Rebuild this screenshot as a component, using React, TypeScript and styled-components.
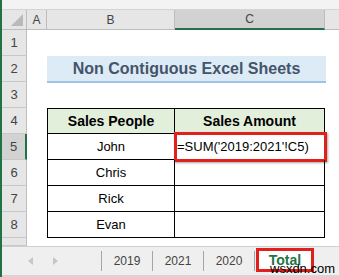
import {Fragment} from "react";
import styled, {createGlobalStyle, css} from "styled-components";

const GlobalStyle = createGlobalStyle`
  html, body {
    margin: 0;
    padding: 0;
    background: #ffffff;
    overflow: hidden;
  }
  body {
    font-family: "Liberation Sans", Arial, sans-serif;
  }
`

const green = "#217346";

const Frame = styled.div`
  width: 337px;
  height: 277px;
  border-left: 2px solid ${green};
  display: flex;
  flex-direction: column;
  overflow: hidden;
`

const TopStrip = styled.div`
  height: 10px;
  background: #f3f3f3;
  border-bottom: 1px solid #d4d4d4;
  box-sizing: border-box;
`

const Sheet = styled.div`
  display: grid;
  grid-template-columns: 25px 20px 128px 150px 1fr;
  grid-template-rows: 20px repeat(8, 26px) 8px;
  background: #ffffff;
`

const Corner = styled.div`
  position: relative;
  background: #e6e6e6;
  border-right: 1px solid #bdbdbd;
  border-bottom: 1px solid #bdbdbd;
  box-sizing: border-box;

  &::after {
    content: "";
    position: absolute;
    right: 3px;
    bottom: 3px;
    border-style: solid;
    border-width: 0 0 12px 12px;
    border-color: transparent transparent #b9b9b9 transparent;
  }
`

const ColHead = styled.div<{ $active?: boolean; $blank?: boolean }>`
  display: flex;
  align-items: center;
  justify-content: center;
  font-size: 12px;
  color: #444444;
  background: ${p => (p.$active ? "#d2d2d2" : "#e6e6e6")};
  border-right: ${p => (p.$blank ? "none" : "1px solid #bdbdbd")};
  border-bottom: ${p => (p.$active ? `2px solid ${green}` : "1px solid #bdbdbd")};
  box-sizing: border-box;
`

const RowHead = styled.div<{ $active?: boolean }>`
  display: flex;
  align-items: center;
  justify-content: center;
  font-size: 13px;
  color: #444444;
  background: ${p => (p.$active ? "#d2d2d2" : "#e6e6e6")};
  border-right: ${p => (p.$active ? `2px solid ${green}` : "1px solid #bdbdbd")};
  border-bottom: 1px solid #c8c8c8;
  box-sizing: border-box;
`

const Empty = styled.div<{ $span?: number }>`
  grid-column: span ${p => p.$span ?? 1};
`

const Title = styled.div`
  grid-column: span 2;
  margin-right: -1px;
  display: flex;
  align-items: center;
  justify-content: center;
  background: #ddebf7;
  border-bottom: 2px solid #9dc3e6;
  margin-bottom: -1px;
  color: #44546a;
  font-weight: bold;
  font-size: 16px;
`

const Cell = styled.div<{ $head?: boolean; $first?: boolean; $left?: boolean }>`
  position: relative;
  display: flex;
  align-items: center;
  justify-content: ${p => (p.$left ? "flex-start" : "center")};
  padding-left: ${p => (p.$left ? "2px" : "0")};
  font-size: 13px;
  color: #000000;
  border-right: 1px solid #000000;
  border-bottom: 1px solid #000000;
  box-sizing: border-box;
  ${p => p.$first && css`border-left: 1px solid #000000;`}
  ${p => p.$head && css`
    border-top: 1px solid #000000;
    background: #e2efda;
    font-weight: bold;
    font-size: 14px;
  `}
`

const Highlight = styled.div`
  position: absolute;
  left: -1px;
  top: -2px;
  right: -3px;
  bottom: -3px;
  border: 3px solid #e0201c;
  box-shadow: 1px 1px 2px rgba(0, 0, 0, 0.35);
  pointer-events: none;
`

const TabBar = styled.div`
  position: relative;
  flex: 1;
  display: flex;
  align-items: stretch;
  background: #efefef;
  border-top: 1px solid #d0d0d0;
  border-bottom: 2px solid #d6d6d6;
  box-sizing: border-box;
`

const Arrows = styled.div`
  width: 100px;
  display: flex;
  align-items: center;
  gap: 20px;
  padding-left: 26px;
  box-sizing: border-box;
  border-right: 1px solid #a6a6a6;
  margin: 4px 0 4px;
`

const Tab = styled.div<{ $active?: boolean }>`
  position: relative;
  width: 51px;
  display: flex;
  align-items: center;
  justify-content: center;
  font-size: 12px;
  color: #444444;
  box-sizing: border-box;
  ${p => p.$active
    ? css`
      background: #ffffff;
      color: ${green};
      font-weight: bold;
      font-size: 14px;
      align-items: flex-start;
      padding-top: 4px;
      margin: 1px 0 3px 1px;
      width: 58px;
    `
    : css`
      border-right: 1px solid #a6a6a6;
      margin: 4px 0;
    `}
`

const TabBox = styled.div`
  position: absolute;
  inset: 0;
  border: 3px solid #e0201c;
`

const Watermark = styled.span`
  position: absolute;
  left: 268px;
  top: 14px;
  font-size: 13px;
  color: #000000;
`

function Arrow({dir}: { dir: "left" | "right" }) {
    return (
        <svg width="5" height="8" viewBox="0 0 5 8">
            {dir === "left"
                ? <path d="M5 0 L0 4 L5 8 Z" fill="#c6c6c6"/>
                : <path d="M0 0 L5 4 L0 8 Z" fill="#c6c6c6"/>}
        </svg>
    )
}

const people = ["John", "Chris", "Rick", "Evan"];

export default function App() {
    return (
        <>
            <GlobalStyle/>
            <Frame>
                <TopStrip/>
                <Sheet>
                    <Corner/>
                    <ColHead>A</ColHead>
                    <ColHead>B</ColHead>
                    <ColHead $active>C</ColHead>
                    <ColHead $blank/>

                    <RowHead>1</RowHead>
                    <Empty $span={4}/>

                    <RowHead>2</RowHead>
                    <Empty/>
                    <Title>Non Contiguous Excel Sheets</Title>
                    <Empty/>

                    <RowHead>3</RowHead>
                    <Empty $span={4}/>

                    <RowHead>4</RowHead>
                    <Empty/>
                    <Cell $head $first>Sales People</Cell>
                    <Cell $head>Sales Amount</Cell>
                    <Empty/>

                    {people.map((name, i) => (
                        <Fragment key={name}>
                            <RowHead $active={i === 0}>{i + 5}</RowHead>
                            <Empty/>
                            <Cell $first>{name}</Cell>
                            <Cell $left>
                                {i === 0 && <>=SUM('2019:2021'!C5)<Highlight/></>}
                            </Cell>
                            <Empty/>
                        </Fragment>
                    ))}

                    <RowHead/>
                    <Empty $span={4}/>
                </Sheet>
                <TabBar>
                    <Arrows>
                        <Arrow dir="left"/>
                        <Arrow dir="right"/>
                    </Arrows>
                    <Tab>2019</Tab>
                    <Tab>2021</Tab>
                    <Tab>2020</Tab>
                    <Tab $active>
                        Total
                        <TabBox/>
                    </Tab>
                    <Watermark>wsxdn.com</Watermark>
                </TabBar>
            </Frame>
        </>
    )
}
